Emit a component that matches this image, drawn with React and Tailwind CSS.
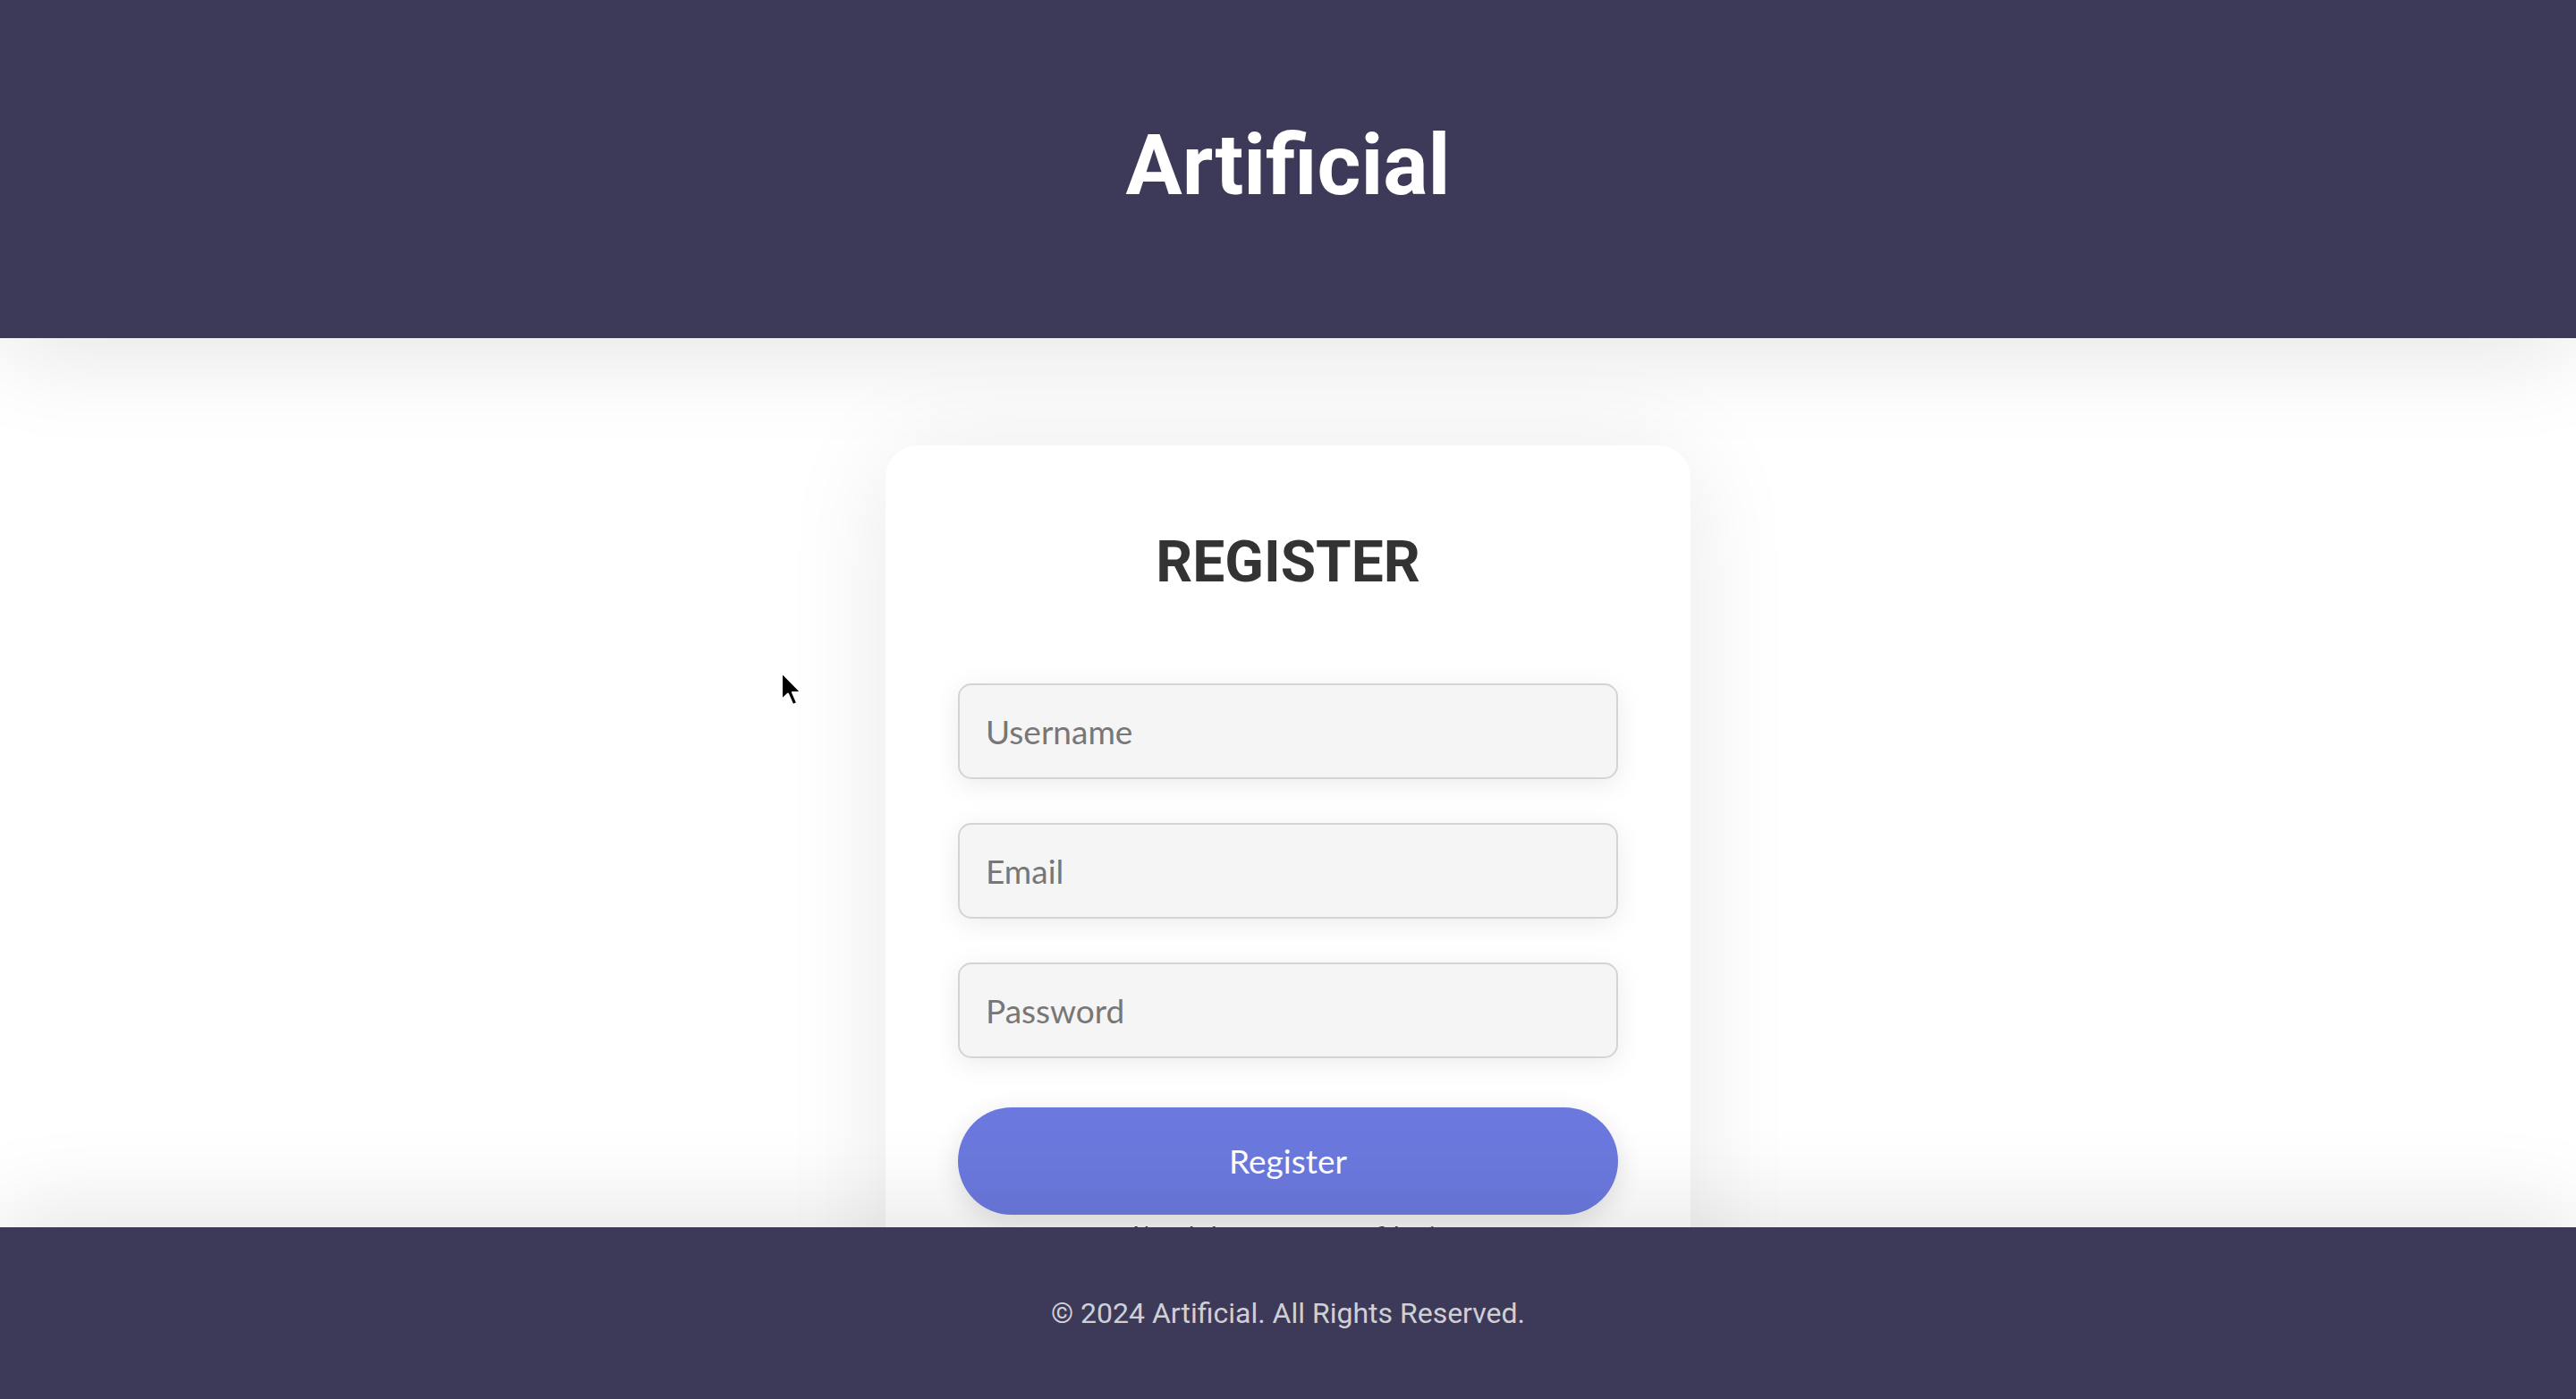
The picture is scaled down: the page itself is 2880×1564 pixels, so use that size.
import React from "react";

function Cursor() {
  return (
    <svg
      className="absolute left-[872px] top-[750px] z-20"
      width="28"
      height="42"
      viewBox="0 0 14 21"
    >
      <path
        d="M1 1 L1 16 L4.5 12.8 L7.2 19 L9.6 18 L7 12 L11.8 12 Z"
        fill="#000"
        stroke="#fff"
        strokeWidth="1"
        strokeLinejoin="round"
      />
    </svg>
  );
}

export default function App() {
  const fields = ["Username", "Email", "Password"];
  return (
    <div className="relative flex h-[1564px] w-full flex-col bg-white">
      <header className="relative z-10 flex h-[378px] shrink-0 items-center justify-center bg-[#3c3a58] pb-[8px] shadow-[0_20px_100px_rgba(0,0,0,0.1)]">
        <h1 className="font-['Roboto',sans-serif] text-[94px] font-bold leading-none text-white">
          Artificial
        </h1>
      </header>

      <main className="flex h-[994px] shrink-0 justify-center overflow-hidden bg-white pt-[120px]">
        <div className="flex h-fit w-[900px] flex-col rounded-[36px] bg-white px-[81px] pt-[94px] pb-[60px] shadow-[0_10px_120px_rgba(0,0,0,0.09)]">
          <h2 className="text-center font-['Roboto',sans-serif] text-[64px] font-bold leading-[74px] text-[#333]">
            REGISTER
          </h2>
          <form className="mt-[98px] flex flex-col gap-[49px]">
            {fields.map((f) => (
              <input
                key={f}
                type={f === "Password" ? "password" : "text"}
                placeholder={f}
                className="h-[107px] w-full rounded-[15px] border-2 border-[#d4d4d4] bg-[#f5f5f5] px-[29px] font-['Lato',sans-serif] text-[37px] text-[#333] shadow-[0_6px_30px_rgba(0,0,0,0.08)] outline-none placeholder:text-[#777]"
              />
            ))}
          </form>
          <button className="mt-[55px] h-[120px] w-full rounded-full bg-[#6b79de] font-['Lato',sans-serif] text-[37px] text-white shadow-[0_8px_30px_rgba(0,0,0,0.12)]">
            Register
          </button>
          <p className="mt-[-1px] text-center font-['Lato',sans-serif] text-[26px] leading-[48px] text-[#2222cc]">
            Already have an account? Login
          </p>
        </div>
      </main>

      <footer className="relative z-10 flex h-[192px] shrink-0 items-center justify-center bg-[#3c3a58] shadow-[0_-20px_100px_rgba(0,0,0,0.1)]">
        <p className="font-['Roboto',sans-serif] text-[32px] text-[#cfcfd6]">
          © 2024 Artificial. All Rights Reserved.
        </p>
      </footer>

      <Cursor />
    </div>
  );
}
